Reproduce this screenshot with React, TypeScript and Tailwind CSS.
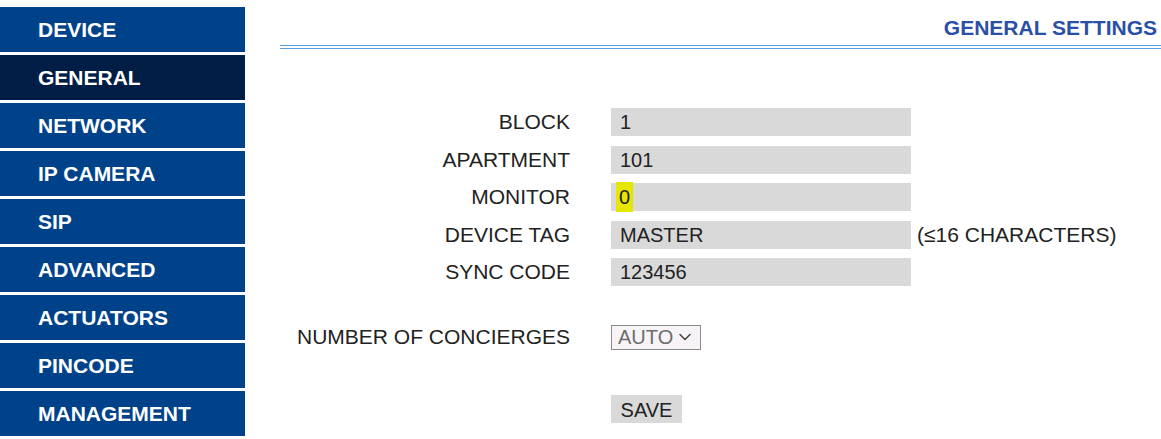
import { ChevronDown } from "lucide-react";

const menu = [
  "DEVICE",
  "GENERAL",
  "NETWORK",
  "IP CAMERA",
  "SIP",
  "ADVANCED",
  "ACTUATORS",
  "PINCODE",
  "MANAGEMENT",
];

const fields = [
  { label: "BLOCK", value: "1" },
  { label: "APARTMENT", value: "101" },
  { label: "MONITOR", value: "0", mark: true },
  { label: "DEVICE TAG", value: "MASTER", note: "(≤16 CHARACTERS)" },
  { label: "SYNC CODE", value: "123456" },
];

export default function App() {
  return (
    <div className="flex w-[1161px] h-[439px] bg-white font-['Liberation_Sans',Arial,sans-serif] overflow-hidden">

      <nav className="flex flex-col gap-[3px] w-[245px] pt-[7px] shrink-0">
        {menu.map(item => (
          <div
            key={item}
            className={`h-[45px] flex items-center pl-[38px] text-[21px] font-bold text-white ${
              item === "GENERAL" ? "bg-[#001e45]" : "bg-[#00428a]"
            }`}
          >
            {item}
          </div>
        ))}
      </nav>

      <main className="flex-1 pl-[35px]">

        <div className="h-[45px] flex items-start justify-end pt-[12px] pr-[4px]">
          <h1 className="text-[21px] font-bold text-[#2a4fa6]">GENERAL SETTINGS</h1>
        </div>
        <div className="border-t border-b border-[#5b9be0] h-[4px]" />

        <div className="flex flex-col gap-[9.5px] mt-[59px]">
          {fields.map(f => (
            <div key={f.label} className="flex items-center h-[28px]">
              <label className="w-[290px] text-right text-[21px] text-[#222]">{f.label}</label>
              <div className="ml-[41px] w-[300px] h-[28px] bg-[#d9d9d9] flex items-center pl-[9px] text-[20px] text-[#222]">
                {f.mark ? <span className="bg-[#e6e600] px-[3px] -ml-[4px]">{f.value}</span> : f.value}
              </div>
              {f.note && <span className="ml-[6px] text-[21px] text-[#222]">{f.note}</span>}
            </div>
          ))}
        </div>

        <div className="flex items-center mt-[37px] h-[28px]">
          <label className="w-[290px] text-right text-[21px] text-[#222]">NUMBER OF CONCIERGES</label>
          <div className="ml-[41px] w-[90px] h-[25px] border border-[#8a8a8a] bg-[#f7f3f7] flex items-center pl-[6px] gap-[2px] text-[20px] text-[#6d6d6d]">
            AUTO
            <ChevronDown size={20} strokeWidth={1.8} className="text-[#444]" />
          </div>
        </div>

        <div className="flex mt-[44px]">
          <button className="ml-[331px] w-[71px] h-[28px] bg-[#d9d9d9] text-[20px] text-[#222]">SAVE</button>
        </div>

      </main>
    </div>
  );
}
